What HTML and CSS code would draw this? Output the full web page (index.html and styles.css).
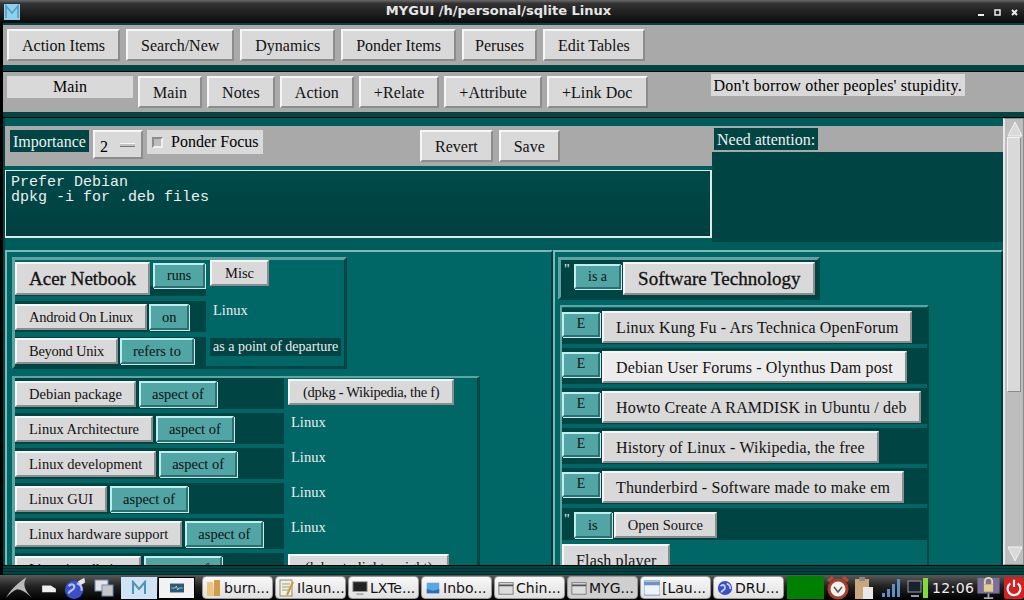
FILE: index.html
```html
<!DOCTYPE html>
<html lang="en">
<head>
  <meta charset="UTF-8">
  <title>MYGUI /h/personal/sqlite Linux</title>
  <link rel="stylesheet" href="styles.css">
</head>
<body>
  <header class="titlebar">
    <svg class="app-icon" viewBox="0 0 16 16"><rect width="16" height="16" fill="#8fd0ec"/><path d="M2 14V2l6 7 6-7v12" fill="none" stroke="#5a9cc0" stroke-width="1.6"/></svg>
    <h1>MYGUI /h/personal/sqlite Linux</h1>
    <div class="win-controls">
      <svg viewBox="0 0 44 10"><path d="M1 8h6" stroke="#eee" stroke-width="2"/><path d="M18 3h5v5h-5z" fill="none" stroke="#eee" stroke-width="1.5"/><path d="M35 3l5 5M40 3l-5 5" stroke="#eee" stroke-width="2"/></svg>
    </div>
  </header>

  <div class="window">
    <nav class="toolbar">
      <button class="btn">Action Items</button>
      <button class="btn">Search/New</button>
      <button class="btn">Dynamics</button>
      <button class="btn">Ponder Items</button>
      <button class="btn btn-tight">Peruses</button>
      <button class="btn">Edit Tables</button>
    </nav>

    <nav class="toolbar toolbar-second">
      <div class="tab-label">Main</div>
      <button class="btn">Main</button>
      <button class="btn">Notes</button>
      <button class="btn">Action</button>
      <button class="btn">+Relate</button>
      <button class="btn">+Attribute</button>
      <button class="btn">+Link Doc</button>
      <div class="quote">Don't borrow other peoples' stupidity.</div>
    </nav>

    <div class="main-pane">
      <div class="content">
        <section class="editor">
          <div class="editor-left">
            <div class="editor-bar">
              <span class="dark-label label-importance">Importance</span>
              <span class="spinner">2<i></i></span>
              <label class="check"><i></i>Ponder Focus</label>
              <button class="btn revert">Revert</button>
              <button class="btn">Save</button>
            </div>
            <div class="notes">Prefer Debian
dpkg -i for .deb files</div>
          </div>
          <div class="editor-right">
            <div class="attention-bar"><span class="dark-label">Need attention:</span></div>
          </div>
        </section>

        <section class="relations">
          <div class="side side-left">
            <div class="panel panel-top">
              <div class="rel-row row-big">
                <button class="btn btn-big btn-acer">Acer Netbook</button><button class="btn btn-teal btn-small">runs</button>
              </div>
              <div class="rel-cell"><button class="btn btn-misc">Misc</button></div>
              <div class="rel-row row-snug">
                <button class="btn btn-rel btn-snug">Android On Linux</button><button class="btn btn-teal btn-rel">on</button>
              </div>
              <div class="rel-cell"><span class="plain">Linux</span></div>
              <div class="rel-row row-snug row-last">
                <button class="btn btn-rel btn-snug">Beyond Unix</button><button class="btn btn-teal btn-rel">refers to</button>
              </div>
              <div class="rel-cell"><span class="plain plain-dark">as a point of departure</span></div>
            </div>

            <div class="panel panel-aspects">
              <div class="rel-row"><button class="btn btn-rel">Debian package</button><button class="btn btn-teal btn-rel">aspect of</button></div>
              <div class="rel-cell"><button class="btn btn-rel btn-link">(dpkg - Wikipedia, the f)</button></div>
              <div class="rel-row"><button class="btn btn-rel">Linux Architecture</button><button class="btn btn-teal btn-rel">aspect of</button></div>
              <div class="rel-cell"><span class="plain">Linux</span></div>
              <div class="rel-row"><button class="btn btn-rel">Linux development</button><button class="btn btn-teal btn-rel">aspect of</button></div>
              <div class="rel-cell"><span class="plain">Linux</span></div>
              <div class="rel-row"><button class="btn btn-rel">Linux GUI</button><button class="btn btn-teal btn-rel">aspect of</button></div>
              <div class="rel-cell"><span class="plain">Linux</span></div>
              <div class="rel-row"><button class="btn btn-rel">Linux hardware support</button><button class="btn btn-teal btn-rel">aspect of</button></div>
              <div class="rel-cell"><span class="plain">Linux</span></div>
              <div class="rel-row"><button class="btn btn-rel btn-snug">Linux installation</button><button class="btn btn-teal btn-rel">aspect of</button></div>
              <div class="rel-cell"><button class="btn btn-rel btn-link-long">(lubuntu light weight)</button></div>
            </div>
          </div>

          <div class="side side-right">
            <div class="panel panel-head">
              <span class="tick">"</span>
              <button class="btn btn-teal btn-small">is a</button><button class="btn btn-big">Software Technology</button>
            </div>
            <div class="panel panel-docs">
              <div class="doc-row"><button class="btn btn-teal btn-e">E</button><button class="btn btn-doc">Linux Kung Fu - Ars Technica OpenForum</button></div>
              <div class="doc-row"><button class="btn btn-teal btn-e">E</button><button class="btn btn-doc btn-lit">Debian User Forums - Olynthus Dam post</button></div>
              <div class="doc-row"><button class="btn btn-teal btn-e">E</button><button class="btn btn-doc">Howto Create A RAMDISK in Ubuntu / deb</button></div>
              <div class="doc-row"><button class="btn btn-teal btn-e">E</button><button class="btn btn-doc">History of Linux - Wikipedia, the free</button></div>
              <div class="doc-row"><button class="btn btn-teal btn-e">E</button><button class="btn btn-doc">Thunderbird - Software made to make em</button></div>
              <div class="doc-row doc-attr"><span class="tick">"</span><button class="btn btn-teal btn-rel btn-is">is</button><button class="btn btn-rel">Open Source</button></div>
              <button class="btn btn-doc">Flash player</button>
            </div>
          </div>
        </section>
      </div>

      <div class="scrollbar">
        <svg class="arrow" viewBox="0 0 16 16"><path d="M8 1L15 15H1z" fill="#d9d9d9" stroke="#f2f2f2"/></svg>
        <div class="thumb"></div>
        <div class="trough"></div>
        <svg class="arrow" viewBox="0 0 16 16"><path d="M8 15L15 1H1z" fill="#d9d9d9" stroke="#f2f2f2"/></svg>
      </div>
    </div>
    <div class="window-foot"></div>
  </div>

  <footer class="taskbar">
    <svg class="launcher start" viewBox="0 0 30 24"><path d="M1 23C6 15 12 8 23 1 19 8 20 14 29 23 22 17 17 14 13 14 9 15 5 19 1 23z" fill="#b9b9b9"/></svg>
    <svg class="launcher desk" viewBox="0 0 18 14"><path d="M1 4h10l6 4v4H1z" fill="#eee"/></svg>
    <svg class="launcher globe" viewBox="0 0 26 26"><circle cx="12" cy="15" r="10" fill="#3a50c8"/><path d="M6 11c4-4 7-1 6 2s-5 2-6 6M15 8c4 1 6 4 5 8" stroke="#b7c4f2" stroke-width="2.4" fill="none"/><path d="M16 6l7-4 1 5-5 3z" fill="#e6e6e6"/></svg>
    <svg class="launcher wins" viewBox="0 0 20 18"><rect x="1" y="1" width="13" height="11" fill="#e4e4e4" stroke="#6f88b4"/><rect x="8" y="6" width="11" height="11" fill="#c6c6c6" stroke="#6f88b4"/></svg>
    <div class="tile tile-active"><svg viewBox="0 0 16 16"><path d="M2 14V2l6 7 6-7v12" fill="none" stroke="#4f93b8" stroke-width="2"/></svg></div>
    <div class="tile tile-framed"><svg viewBox="0 0 22 14"><rect width="22" height="14" fill="#2d5a78"/><path d="M2 7h6l2-3 2 6 2-3h6" stroke="#dfe" fill="none"/></svg></div>
    <div class="tasks">
      <div class="task"><svg viewBox="0 0 16 18"><path d="M1 3h6l1 14H1z" fill="#e9c77e"/><path d="M8 1h6v16H8z" fill="#cf9d4c"/></svg>burn...</div>
      <div class="task"><svg viewBox="0 0 16 18"><rect x="1" y="1" width="12" height="16" fill="#f2f0d8" stroke="#888"/><path d="M3 5h8M3 8h8M3 11h8" stroke="#999"/><path d="M14 3L8 16" stroke="#d29a2e" stroke-width="2"/></svg>Ilaun...</div>
      <div class="task"><svg viewBox="0 0 18 18"><rect x="1" y="2" width="16" height="11" fill="#222" stroke="#999"/><path d="M5 16h8" stroke="#aaa" stroke-width="2"/></svg>LXTe...</div>
      <div class="task"><svg viewBox="0 0 18 18"><path d="M2 3h14v12H2z" fill="#5aa6e0"/><path d="M2 10l7 2 7-2v5H2z" fill="#2f6fb0"/></svg>Inbo...</div>
      <div class="task"><svg viewBox="0 0 18 18"><rect x="1" y="3" width="16" height="13" fill="#ddd" stroke="#777"/><path d="M1 6h16" stroke="#555" stroke-width="2"/></svg>Chin...</div>
      <div class="task task-on"><svg viewBox="0 0 18 18"><rect x="1" y="3" width="16" height="13" fill="#ddd" stroke="#777"/><path d="M1 6h16" stroke="#555" stroke-width="2"/></svg>MYG...</div>
      <div class="task"><svg viewBox="0 0 18 18"><rect x="0" y="1" width="18" height="16" fill="#eef3fa" stroke="#6f93c4"/><path d="M0 4h18" stroke="#6f93c4" stroke-width="4"/></svg>[Lau...</div>
      <div class="task"><svg viewBox="0 0 18 18"><circle cx="9" cy="9" r="8" fill="#3a50c8"/><path d="M4 7c3-3 5-1 5 2s-4 2-4 5M11 4c3 1 4 4 4 6" stroke="#c7d2f5" stroke-width="2" fill="none"/></svg>DRU...</div>
    </div>
    <div class="green-block"></div>
    <svg class="tray clock" viewBox="0 0 24 24"><circle cx="12" cy="13" r="9" fill="#f0f0f0" stroke="#a5412a" stroke-width="3"/><path d="M8 11l4 5 4-5" stroke="#555" stroke-width="1.5" fill="none"/><path d="M2 5l5-4M22 5l-5-4" stroke="#b84c30" stroke-width="3"/></svg>
    <svg class="tray clip" viewBox="0 0 20 24"><rect x="1" y="3" width="14" height="20" fill="#c9a77c"/><rect x="5" y="1" width="6" height="4" fill="#888"/><rect x="9" y="11" width="10" height="12" fill="#e8e8e8"/></svg>
    <svg class="tray signal" viewBox="0 0 20 20"><path d="M1 15h3v4H1zM6 11h3v8H6zM11 6h3v13h-3zM16 1h3v18h-3z" fill="#5f8fc4"/></svg>
    <svg class="tray battery" viewBox="0 0 22 22"><rect x="1" y="4" width="13" height="11" fill="#16222c" stroke="#99a"/><path d="M4 19h8" stroke="#99a" stroke-width="2"/><rect x="16" y="1" width="5" height="20" fill="#7fdc3a"/></svg>
    <time class="time">12:06</time>
    <svg class="tray lock" viewBox="0 0 26 26"><rect x="1" y="2" width="24" height="17" fill="#7d6f9c"/><path d="M9 9V6a4 4 0 0 1 8 0v3" stroke="#e7d8a4" fill="none" stroke-width="2"/><rect x="8" y="9" width="10" height="8" fill="#e2cf8a"/><path d="M13 19v4M8 24h10" stroke="#aaa" stroke-width="2"/></svg>
    <svg class="tray power" viewBox="0 0 22 24"><rect width="22" height="24" rx="2" fill="#d32020"/><path d="M7 7a7 7 0 1 0 8 0M11 3v8" stroke="#fff" stroke-width="2.4" fill="none"/></svg>
  </footer>
</body>
</html>
```

FILE: styles.css
```css
* {
  box-sizing: border-box;
}

html, body {
  margin: 0;
  height: 100%;
}

body {
  width: 1024px;
  height: 600px;
  overflow: hidden;
  display: flex;
  flex-direction: column;
  background: #000;
  font-family: "Liberation Serif", serif;
  font-size: 16px;
}

/* window title */
.titlebar {
  height: 23px;
  flex: none;
  display: flex;
  align-items: center;
  background: linear-gradient(#6a6a6a, #333 15%, #222 50%, #0c0c0c);
}
.app-icon {
  width: 16px;
  height: 16px;
  margin-left: 4px;
}
.titlebar h1 {
  flex: 1;
  margin: 0 0 2px;
  text-align: center;
  color: #e6e6e6;
  font: bold 13px "DejaVu Sans", sans-serif;
}
.win-controls svg {
  display: block;
  width: 44px;
  height: 10px;
  margin-right: 3px;
}

.window {
  flex: 1;
  min-height: 0;
  display: flex;
  flex-direction: column;
  background: #004444;
  border-left: 3px solid #000;
  padding-top: 2px;
}

/* buttons */
.btn {
  font-family: "Liberation Serif", serif;
  font-size: 16px;
  line-height: 1;
  color: #111;
  background: #d9d9d9;
  border: 2px solid;
  border-color: #f6f6f6 #8c8c8c #8c8c8c #f6f6f6;
  padding: 0 13px;
  margin: 0;
  height: 32px;
  white-space: nowrap;
  flex: none;
}
.btn-teal {
  background: #52a5a5;
  border-color: #bfeeee #2d6f6f #2d6f6f #bfeeee;
  box-shadow: 1px 1px 0 #c4ecec;
}
.btn-big {
  font-size: 19px;
  height: 33px;
  padding: 0 13px;
  -webkit-text-stroke: 0.3px #111;
}
.btn-acer {
  padding: 0 12px;
}
.btn-small {
  font-size: 14px;
  height: 25px;
  padding: 0 12px;
}
.btn-rel {
  height: 26px;
  font-size: 14.5px;
  padding: 0 12px;
}
.btn-rel.btn-teal {
  padding: 0 11px;
}
.btn-rel.btn-is {
  padding: 0 12px;
}
.btn-snug {
  letter-spacing: -0.25px;
}
.btn-link {
  margin-top: 1px;
  padding: 0 13px;
  letter-spacing: -0.3px;
}
.btn-link-long {
  margin-top: 1px;
  padding: 0 15px;
}
.btn-misc {
  font-size: 14.5px;
  height: 26px;
  padding: 0 13px;
}
.btn-e {
  width: 38px;
  height: 25px;
  margin-top: 1px;
  padding: 0 0 2px;
  font-size: 14px;
}
.btn-doc {
  height: 32px;
  padding: 1px 12px 0;
  letter-spacing: 0.15px;
}
.btn-lit {
  background: #ececec;
}

/* top toolbars */
.toolbar {
  height: 44px;
  flex: none;
  display: flex;
  gap: 6px;
  padding: 4px 4px 0;
  background: #a9a9a9;
  border-bottom: 4px solid #004444;
}
.toolbar .btn {
  padding-top: 1px;
}
.toolbar .btn-tight {
  padding: 1px 11px 0;
}
.toolbar-second {
  margin-top: 3px;
  gap: 5px;
  box-shadow: 0 -1px 0 #000;
}
.toolbar-second .btn {
  letter-spacing: 0.08px;
}
.tab-label {
  width: 126px;
  height: 22px;
  background: #d9d9d9;
  text-align: center;
  line-height: 22px;
}
.quote {
  height: 22px;
  margin: -2px 0 0 58px;
  padding: 1px 3px 0;
  background: #d9d9d9;
  line-height: 21px;
  letter-spacing: 0.2px;
}

.main-pane {
  flex: 1;
  min-height: 0;
  display: flex;
  margin-top: 1px;
  border-top: 1px solid #000;
}
.content {
  flex: 1;
  min-width: 0;
  overflow: hidden;
  margin-left: 2px;
  padding-top: 8px;
  display: flex;
  flex-direction: column;
  background: #005b5b;
}

/* notes editor */
.editor {
  display: flex;
  flex: none;
  height: 116px;
}
.editor-left {
  width: 707px;
}
.editor-bar {
  height: 40px;
  display: flex;
  align-items: flex-start;
  padding: 4px 0 0 5px;
  background: #a9a9a9;
}
.editor-bar .btn {
  padding-top: 1px;
}
.dark-label {
  display: inline-block;
  height: 22px;
  padding: 0 3px;
  background: #004444;
  color: #f0f0f0;
  line-height: 23px;
  flex: none;
}
.label-importance {
  width: 79px;
  white-space: nowrap;
}
.spinner {
  width: 50px;
  height: 29px;
  margin: 0 4px;
  background: #d9d9d9;
  border: 2px solid;
  border-color: #f6f6f6 #8c8c8c #8c8c8c #f6f6f6;
  padding: 6px 0 0 5px;
  position: relative;
  font-size: 16px;
}
.spinner i {
  position: absolute;
  right: 6px;
  top: 11px;
  width: 15px;
  height: 4px;
  background: #c4c4c4;
  border-top: 1px solid #f6f6f6;
  border-bottom: 1px solid #777;
}
.check {
  height: 24px;
  width: 116px;
  display: flex;
  align-items: center;
  gap: 8px;
  padding-left: 5px;
  background: #d9d9d9;
  white-space: nowrap;
}
.check i {
  width: 11px;
  height: 11px;
  border: 2px solid;
  border-color: #8c8c8c #f0f0f0 #f0f0f0 #8c8c8c;
  background: #bdbdbd;
}
.revert {
  margin-left: 157px;
  margin-right: 6px;
}
.notes {
  height: 68px;
  margin-top: 4px;
  padding: 4px 5px;
  white-space: pre;
  color: #eee;
  background: linear-gradient(#004a4a, #003f3f);
  border: 1px solid #e0e8e8;
  border-width: 1px 2px 2px 1px;
  font: 15px/15px "Liberation Mono", monospace;
}
.editor-right {
  flex: 1;
  background: #004444;
}
.attention-bar {
  height: 26px;
  padding: 2px 0 0 2px;
  background: #a9a9a9;
}

/* relations */
.relations {
  flex: 1;
  min-height: 0;
  display: flex;
  margin-top: 8px;
}
.side {
  overflow: hidden;
  border-top: 2px solid #7fb8b8;
  border-left: 2px solid #7fb8b8;
  border-right: 2px solid #003c3c;
  background: #006666;
  padding: 5px;
}
.side-left {
  width: 548px;
}
.side-right {
  flex: 1;
  padding-left: 3px;
}
.panel {
  border: 3px solid;
  border-color: #5fa3a3 #004444 #004444 #5fa3a3;
  background: #006666;
}
.panel-top, .panel-aspects {
  display: grid;
  column-gap: 4px;
  align-items: start;
}
.panel-top {
  width: 335px;
  height: 112px;
  grid-template-columns: 191px 1fr;
  grid-template-rows: 41px 36px 32px;
}
.panel-aspects {
  width: 468px;
  margin-top: 7px;
  border-top-width: 2px;
  grid-template-columns: 269px 1fr;
  grid-auto-rows: 35px;
  height: 260px;
}
.rel-row {
  display: flex;
  align-items: flex-start;
  gap: 3px;
  height: 31px;
  padding-top: 3px;
  background: #004444;
}
.row-snug {
  gap: 2px;
}
.row-big {
  height: 36px;
  padding-top: 2px;
  background: linear-gradient(#006666 26px, #004444 26px);
}
.row-big .btn-small {
  margin-top: 1px;
}
.row-last {
  padding-top: 1px;
}
.rel-cell {
  height: 31px;
}
.plain {
  display: inline-block;
  padding: 0 3px;
  color: #eee;
  font-size: 14.5px;
  line-height: 18px;
}
.panel-aspects .plain {
  margin-top: -1px;
}
.plain-dark {
  background: #004444;
  font-size: 14px;
  margin-top: -1px;
}

.panel-head {
  display: flex;
  align-items: flex-start;
  width: 262px;
  height: 43px;
  padding: 2px 0 0 1px;
  background: #004444;
  gap: 2px;
}
.tick {
  width: 12px;
  margin-right: -2px;
  padding-left: 2px;
  color: #eee;
  font-size: 14px;
  flex: none;
}
.panel-head .btn-small {
  margin-top: 2px;
}
.panel-docs {
  width: 369px;
  height: 280px;
  margin: 5px 0 0 2px;
  padding: 1px 0 0;
  border-width: 2px;
}
.doc-row {
  height: 36px;
  margin-bottom: 4px;
  display: flex;
  align-items: flex-start;
  gap: 2px;
  padding-top: 3px;
  background: #004444;
}
.doc-attr {
  height: 32px;
  padding-top: 4px;
}

/* scrollbar */
.scrollbar {
  width: 21px;
  flex: none;
  display: flex;
  flex-direction: column;
  padding: 2px;
  background: #bdbdbd;
  border: 1px solid #8c8c8c;
  border-width: 1px 1px 1px 2px;
  border-left-color: #e8e8e8;
}
.arrow {
  width: 16px;
  height: 16px;
  flex: none;
}
.thumb {
  height: 255px;
  flex: none;
  background: #d9d9d9;
  border: 1px solid;
  border-color: #f2f2f2 #8c8c8c #8c8c8c #f2f2f2;
}
.trough {
  flex: 1;
}

.window-foot {
  height: 10px;
  flex: none;
  background: repeating-linear-gradient(#004444 0 2px, #002a2a 2px 3px);
  border-top: 1px solid #000;
}

/* desktop panel */
.taskbar {
  height: 25px;
  flex: none;
  display: flex;
  align-items: center;
  background: linear-gradient(#5a5a5a, #222 45%, #000);
  font: 14px "DejaVu Sans", sans-serif;
  color: #111;
}
.launcher {
  flex: none;
}
.start {
  width: 28px;
  height: 23px;
  margin-left: 5px;
}
.desk {
  width: 16px;
  height: 12px;
  margin-left: 8px;
}
.globe {
  width: 24px;
  height: 24px;
  margin-left: 6px;
}
.wins {
  width: 20px;
  height: 18px;
  margin-left: 7px;
}
.tile {
  width: 37px;
  height: 22px;
  margin-left: 1px;
  display: flex;
  align-items: center;
  justify-content: center;
  background: #cfe3f5;
}
.tile svg {
  width: 16px;
  height: 16px;
}
.tile-active {
  margin-left: 7px;
}
.tile-framed {
  background: #f2f2f2;
  border: 1px solid #000;
}
.tile-framed svg {
  width: 14px;
  height: 10px;
}
.tasks {
  display: flex;
  gap: 2px;
  margin-left: 7px;
}
.task {
  width: 71px;
  height: 23px;
  display: flex;
  align-items: center;
  gap: 2px;
  padding-left: 3px;
  background: linear-gradient(#f8f8f8, #e0e0e0);
  border: 1px solid #999;
  border-radius: 4px;
  white-space: nowrap;
  overflow: hidden;
}
.task svg {
  width: 16px;
  height: 18px;
  flex: none;
}
.task-on {
  background: #cfcfcf;
}
.green-block {
  width: 37px;
  height: 23px;
  margin-left: 3px;
  flex: none;
  background: #008000;
}
.tray {
  flex: none;
}
.clock {
  width: 24px;
  height: 24px;
  margin-left: 2px;
}
.clip {
  width: 20px;
  height: 24px;
  margin-left: 4px;
}
.signal {
  width: 20px;
  height: 20px;
  margin-left: 7px;
}
.battery {
  width: 22px;
  height: 22px;
  margin-left: 6px;
}
.time {
  width: 42px;
  margin-left: 3px;
  text-align: center;
  color: #eee;
  font-size: 14px;
  letter-spacing: 0.4px;
}
.lock {
  width: 25px;
  height: 24px;
  margin-left: 2px;
}
.power {
  width: 20px;
  height: 22px;
  margin-left: 3px;
}
```
